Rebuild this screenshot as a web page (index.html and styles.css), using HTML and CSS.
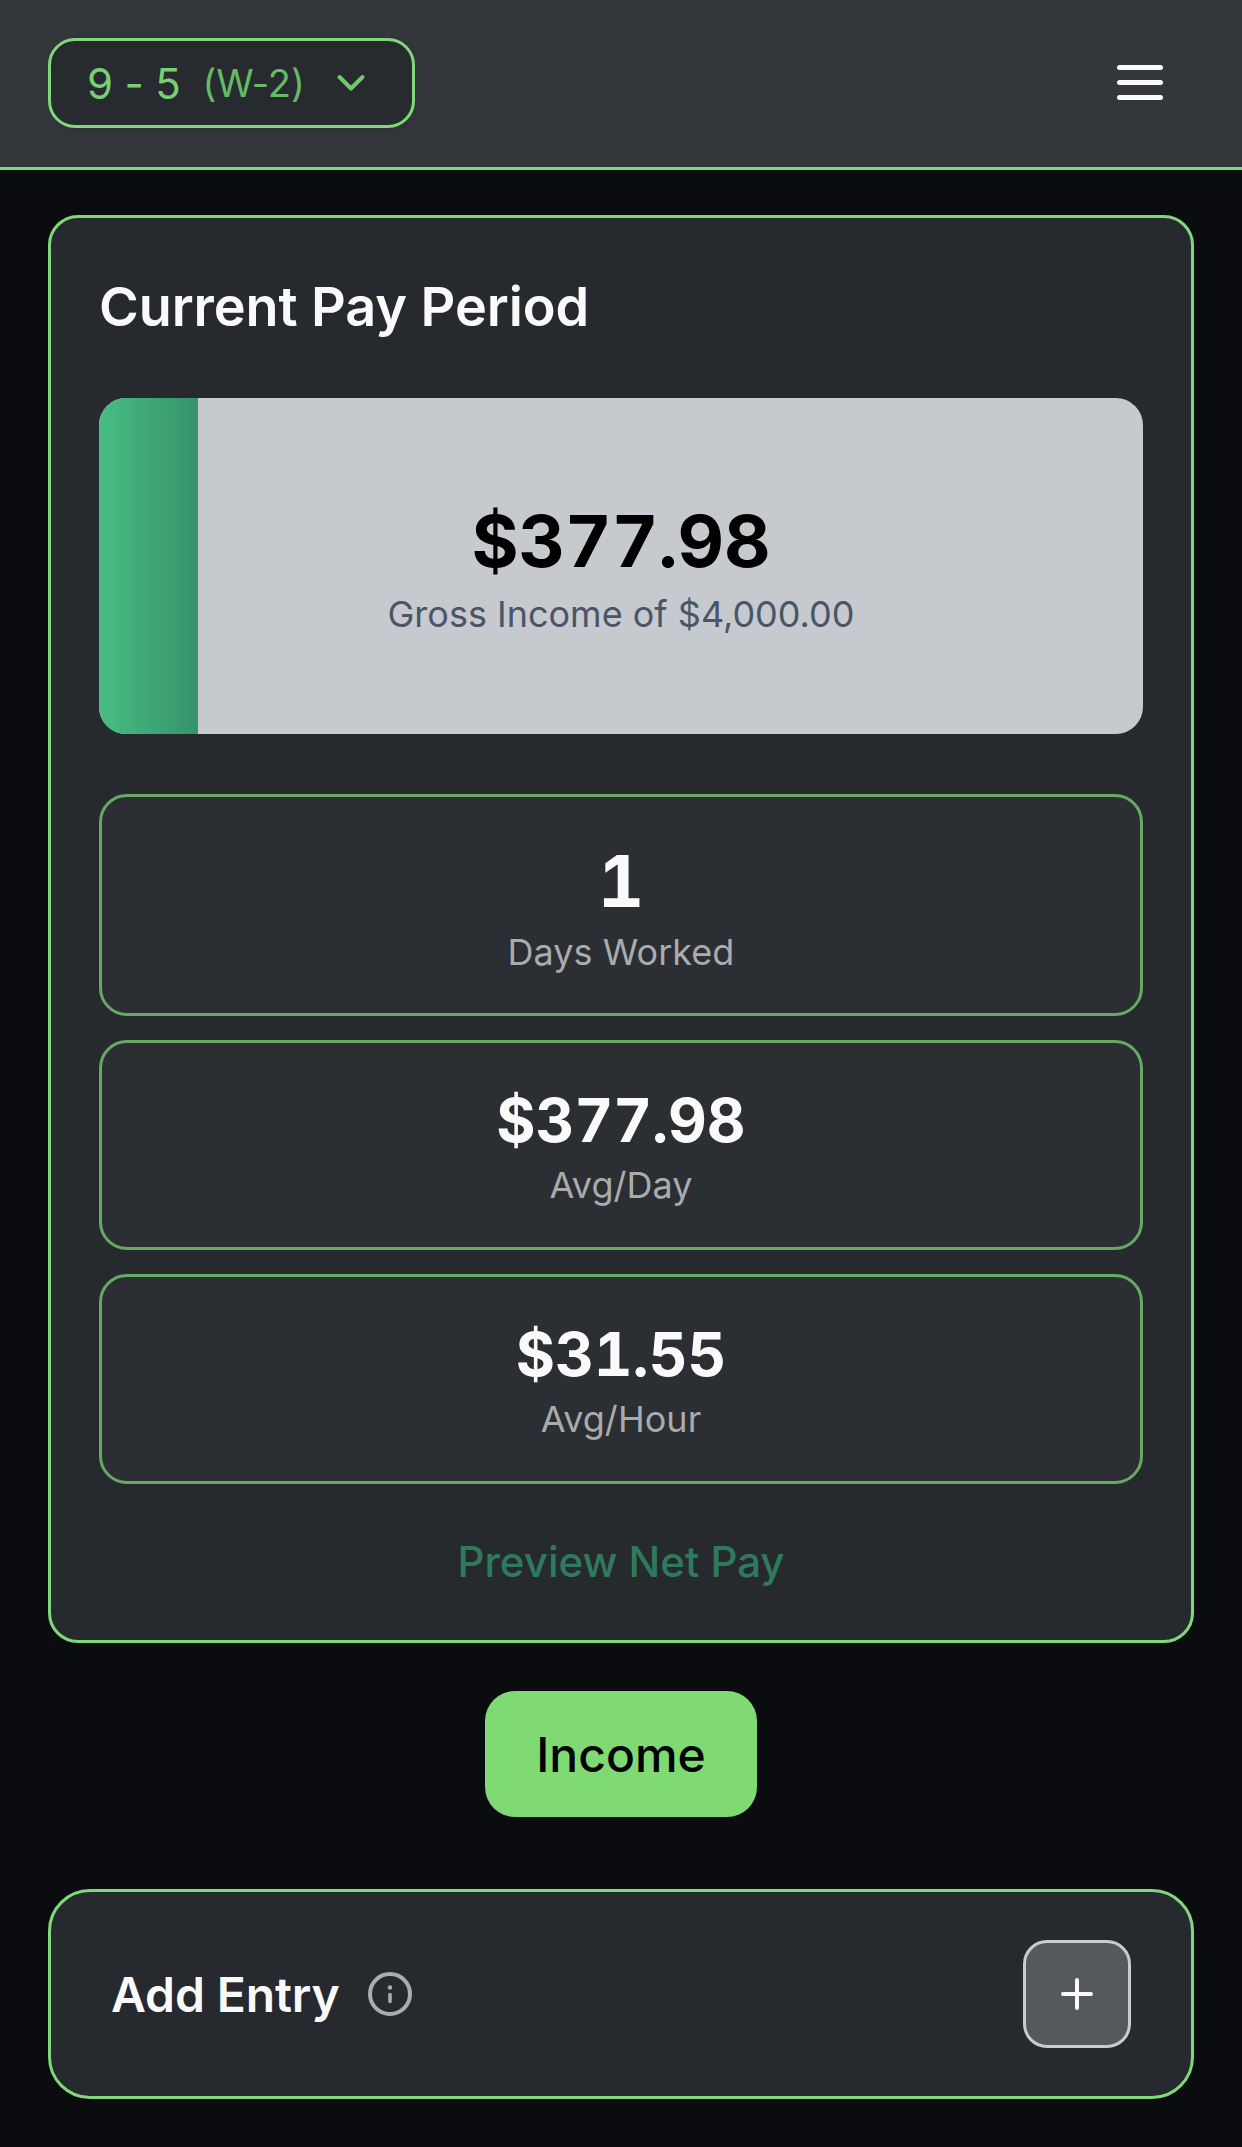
FILE: index.html
```html
<!DOCTYPE html>
<html lang="en">
<head>
<meta charset="utf-8">
<title>Current Pay Period</title>
<link rel="stylesheet" href="styles.css">
</head>
<body>
<header class="topbar">
  <button class="job-select">
    <span class="job-name">9 - 5</span>
    <span class="job-type">(W-2)</span>
    <svg class="chevron" viewBox="0 0 32 20" fill="none"><path d="M4.500 4l11.500 11.500L27.500 4" stroke="currentColor" stroke-width="4" stroke-linecap="round" stroke-linejoin="round"/></svg>
  </button>
  <button class="menu-btn" aria-label="Menu">
    <span class="menu-line"></span><span class="menu-line"></span><span class="menu-line"></span>
  </button>
</header>
<main class="content">
  <section class="card period">
    <h1 class="period-title">Current Pay Period</h1>
    <div class="progress">
      <div class="progress-fill" style="width:9.45%"></div>
      <div class="progress-text">
        <div class="progress-amount">$377.98</div>
        <div class="progress-label">Gross Income of $4,000.00</div>
      </div>
    </div>
    <div class="stats">
      <div class="stat stat-lg"><div class="stat-value">1</div><div class="stat-label">Days Worked</div></div>
      <div class="stat"><div class="stat-value">$377.98</div><div class="stat-label">Avg/Day</div></div>
      <div class="stat"><div class="stat-value">$31.55</div><div class="stat-label">Avg/Hour</div></div>
    </div>
    <a class="preview-link">Preview Net Pay</a>
  </section>
  <button class="income-btn">Income</button>
  <section class="card add-entry">
    <div class="add-left">
      <h2 class="add-title">Add Entry</h2>
      <svg class="info-icon" viewBox="0 0 44 44" fill="none"><circle cx="22" cy="22" r="20" stroke="currentColor" stroke-width="4"/><path d="M22 22.500v7" stroke="currentColor" stroke-width="3.600" stroke-linecap="round"/><circle cx="22" cy="15.500" r="2.200" fill="currentColor"/></svg>
    </div>
    <button class="add-btn" aria-label="Add">
      <svg class="plus-icon" viewBox="0 0 32 32" fill="none"><path d="M16 2v28M2 16h28" stroke="currentColor" stroke-width="4" stroke-linecap="round"/></svg>
    </button>
  </section>
</main>
</body>
</html>
```
FILE: styles.css
```css
* { box-sizing: border-box; }
html, body { margin: 0; padding: 0; }
body {
  background: #0a0c0f;
  font-family: Inter, "Liberation Sans", sans-serif;
  color: #fafafa;
  min-height: 2147px;
}
button { font-family: inherit; cursor: pointer; }

.topbar {
  height: 170px;
  background: #33363b;
  border-bottom: 3px solid #80d87a;
  padding: 38px 79px 0 48px;
  display: flex;
  justify-content: space-between;
  align-items: flex-start;
}
.job-select {
  width: 367px;
  height: 90px;
  background: #272a2f;
  border: 3px solid #80d87a;
  border-radius: 27px;
  padding: 0 0 0 36px;
  display: flex;
  align-items: center;
  box-shadow: 0 3px 9px rgba(0, 0, 0, 0.1);
}
.job-name { font-size: 42px; color: #78d070; letter-spacing: -0.2px; }
.job-type { font-size: 38px; color: #63bb65; margin-left: 22px; letter-spacing: -0.1px; }
.chevron { width: 32px; height: 20px; color: #6fcb6a; margin-left: 30px; }

.menu-btn {
  background: none;
  border: 0;
  padding: 0;
  margin-top: 27px;
  width: 46px;
  display: flex;
  flex-direction: column;
  gap: 10px;
}
.menu-line { display: block; height: 5px; width: 46px; border-radius: 3px; background: #fafafa; }

.content { padding: 45px 48px 0; display: flex; flex-direction: column; align-items: center; }
.card {
  width: 100%;
  background: #26292e;
  border: 3px solid #80d87a;
  border-radius: 30px;
}
.period { padding: 48px 48px 47px; display: flex; flex-direction: column; }
.period-title { margin: 0 0 51px; font-size: 54px; line-height: 81px; font-weight: 600; color: #fafafa; letter-spacing: -0.08px; }

.progress {
  position: relative;
  height: 336px;
  background: #c6c9ce;
  border-radius: 27px;
  overflow: hidden;
  display: flex;
  align-items: center;
  justify-content: center;
}
.progress-fill {
  position: absolute;
  left: 0; top: 0; bottom: 0;
  background: linear-gradient(90deg, #48bd84, #35926a);
}
.progress-text { position: relative; text-align: center; margin-top: 6px; }
.progress-amount { font-size: 72px; line-height: 86px; font-weight: 700; color: #000; font-variant-numeric: tabular-nums; }
.progress-label { font-size: 36px; line-height: 54px; color: #4a5568; margin-top: 3px; }

.stats { margin-top: 60px; display: flex; flex-direction: column; gap: 24px; }
.stat {
  background: #2b2e33;
  border: 3px solid #67a865;
  border-radius: 28px;
  padding: 41px 0 0;
  text-align: center;
  height: 210px;
}
.stat-lg { height: 222px; }
.stat-value { font-size: 60px; line-height: 72px; font-weight: 700; color: #fafafa; font-variant-numeric: tabular-nums; }
.stat-lg .stat-value { font-size: 72px; line-height: 86px; }
.stat-label { font-size: 36px; line-height: 54px; color: #a9abad; margin-top: 2px; letter-spacing: 0.04px; }
.stat-lg .stat-label { margin-top: 1px; }

.preview-link { margin-top: 46px; text-align: center; font-size: 42px; line-height: 63px; font-weight: 500; color: #2f7a5c; }

.income-btn {
  margin-top: 48px;
  width: 272px;
  height: 126px;
  border: 0;
  border-radius: 30px;
  background: #7fda74;
  color: #000;
  font-size: 48px;
  font-weight: 500;
}
.add-entry {
  margin-top: 72px;
  height: 210px;
  border-radius: 42px;
  padding: 0 60px;
  display: flex;
  align-items: center;
  justify-content: space-between;
}
.add-left { display: flex; align-items: center; gap: 28px; }
.add-title { margin: 0; font-size: 48px; font-weight: 600; color: #fafafa; letter-spacing: -0.1px; }
.info-icon { width: 44px; height: 44px; color: #aaacae; }
.add-btn {
  width: 108px;
  height: 108px;
  background: #55585c;
  border: 3px solid #c9cbcf;
  border-radius: 24px;
  padding: 0;
  display: flex;
  align-items: center;
  justify-content: center;
}
.plus-icon { width: 32px; height: 32px; color: #fafafa; }
```
